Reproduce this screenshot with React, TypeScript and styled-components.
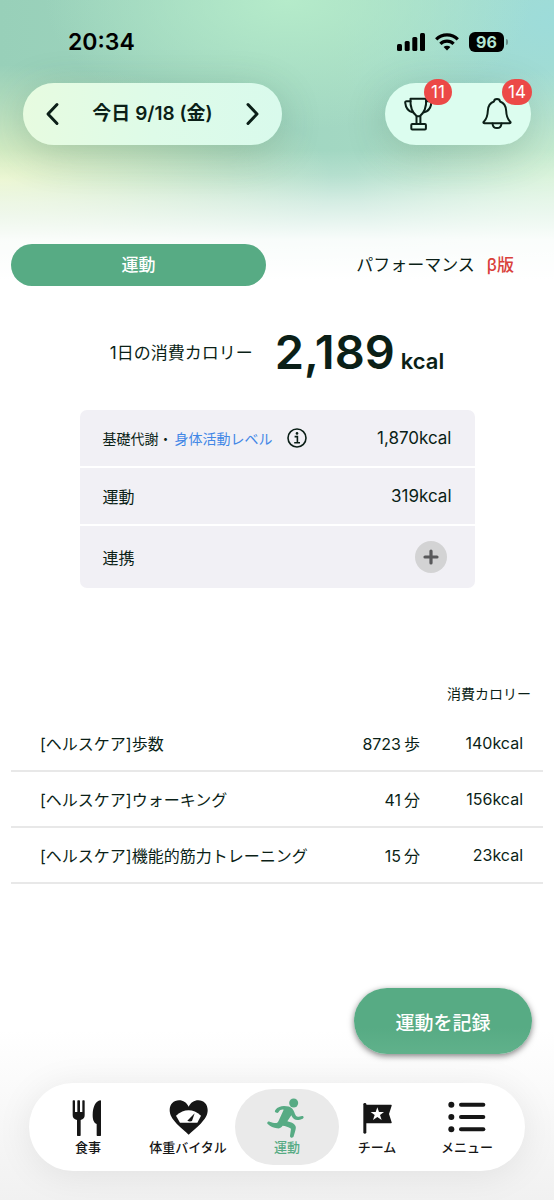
import React from 'react';
import styled, { createGlobalStyle } from 'styled-components';

const ink = '#0b1f17';
const green = '#57ab84';

const GlobalStyle = createGlobalStyle`
  * { box-sizing: border-box; }
  body {
    margin: 0;
    background: #fff;
    color: ${ink};
    font-family: Inter, "Noto Sans CJK JP", sans-serif;
    font-size: 16px;
  }
  button {
    font: inherit;
    color: inherit;
    background: none;
    border: 0;
    padding: 0;
    cursor: pointer;
  }
  svg { display: block; }
`;

const Page = styled.div`
  min-height: 100vh;
  display: flex;
  flex-direction: column;
  background:
    linear-gradient(to top, #f1f1f1 0, #f5f5f5 50px, rgba(255, 255, 255, 0) 170px),
    linear-gradient(to bottom, rgba(255, 255, 255, 0) 150px, rgba(255, 255, 255, 0.2) 175px, rgba(255, 255, 255, 0.55) 202px, rgba(255, 255, 255, 0.93) 240px, #fff 280px),
    radial-gradient(ellipse 60% 115px at 0 180px, #e6f4c6 0, rgba(230, 244, 198, 0.5) 50%, rgba(230, 244, 198, 0) 100%),
    radial-gradient(ellipse 36% 110px at 100% 180px, #d0f0d2 0, rgba(208, 240, 210, 0) 100%),
    radial-gradient(ellipse 44% 130px at 52% 0, #b5ebca 0, rgba(181, 235, 202, 0) 100%),
    radial-gradient(ellipse 40% 170px at 100% 20px, #9ddcda 0, rgba(157, 220, 218, 0) 100%),
    linear-gradient(to right, #98d0b9, #a9dcc8);
`;

const StatusBar = styled.div`
  height: 83px;
  padding: 0 46px 0 68px;
  display: flex;
  align-items: center;
  justify-content: space-between;
  color: #000;
`;

const Clock = styled.span`
  font-size: 23px;
  font-weight: 600;
  line-height: 28px;
`;

const StatusIcons = styled.div`
  display: flex;
  align-items: center;
  gap: 10px;
`;

const Battery = styled.div`
  display: flex;
  align-items: center;
  gap: 2px;
  &::after {
    content: '';
    width: 2px;
    height: 6px;
    border-radius: 0 2px 2px 0;
    background: rgba(0, 0, 0, 0.35);
  }
`;

const BatteryLevel = styled.span`
  width: 35px;
  height: 20px;
  border-radius: 6px;
  background: #000;
  color: #b4e6d4;
  font-size: 16px;
  font-weight: 700;
  line-height: 20px;
  text-align: center;
`;

const Header = styled.header`
  display: flex;
  justify-content: space-between;
  padding: 0 23px;
`;

const Pill = styled.div<{ $width: number; $pad: number; $tint: string }>`
  width: ${p => p.$width}px;
  height: 62px;
  padding: 0 ${p => p.$pad}px;
  border-radius: 31px;
  display: flex;
  align-items: center;
  justify-content: space-between;
  background: ${p => p.$tint};
  box-shadow: 0 8px 40px rgba(50, 90, 65, 0.24);
`;

const DateText = styled.span`
  font-size: 19px;
  font-weight: 600;
  line-height: 24px;
`;

const IconButton = styled.button`
  position: relative;
`;

const Badge = styled.span`
  position: absolute;
  left: 20px;
  bottom: 26px;
  height: 26px;
  min-width: 28px;
  padding: 0 6px;
  border-radius: 13px;
  background: #ec4947;
  color: #fff;
  font-size: 17px;
  line-height: 26px;
`;

const Tabs = styled.div`
  margin: 99px 11px 0;
  display: grid;
  grid-template-columns: 1fr 1fr;
  column-gap: 22px;
`;

const Tab = styled.button<{ $active?: boolean }>`
  height: 42px;
  border-radius: 21px;
  display: grid;
  grid-template-columns: 1fr auto 1fr;
  align-items: center;
  column-gap: 12px;
  font-size: 17px;
  line-height: 24px;
  ${p => p.$active && `background: ${green}; color: #fff; font-weight: 500;`}
`;

const TabLabel = styled.span`
  grid-column: 2;
`;

const Beta = styled.span`
  justify-self: start;
  color: #d9413b;
  font-size: 17px;
  font-weight: 500;
`;

const Total = styled.div`
  margin-top: 38px;
  height: 58px;
  display: flex;
  align-items: center;
  justify-content: center;
  gap: 22px;
`;

const TotalLabel = styled.span`
  font-size: 17px;
  line-height: 24px;
`;

const TotalValue = styled.span`
  padding-top: 6px;
  font-size: 47px;
  font-weight: 600;
  line-height: 56px;
`;

const TotalUnit = styled.span`
  margin-left: 6px;
  font-size: 22px;
`;

const Card = styled.section`
  width: calc(100% - 159px);
  margin: 28px auto 0;
  border-radius: 7px;
  overflow: hidden;
  display: grid;
  row-gap: 2px;
`;

const CardRow = styled.div<{ $tall?: boolean }>`
  height: ${p => (p.$tall ? 62 : 56)}px;
  padding: 0 ${p => (p.$tall ? 28 : 23)}px 0 23px;
  display: flex;
  align-items: center;
  justify-content: space-between;
  background: #f1f0f5;
`;

const Basal = styled.span`
  display: flex;
  align-items: center;
  gap: 14px;
  font-size: 14px;
`;

const BasalLabel = styled.span`
  display: flex;
  gap: 2px;
`;

const LevelLink = styled.a`
  color: #4287e6;
  text-decoration: none;
`;

const Energy = styled.span`
  font-size: 17px;
`;

const AddButton = styled.button`
  width: 32px;
  height: 32px;
  border-radius: 50%;
  background: #d3d3d4;
  display: grid;
  place-items: center;
`;

const Records = styled.table`
  width: calc(100% - 22px);
  margin: 84px 11px 0;
  border-collapse: separate;
  border-spacing: 0;
`;

const HeadCell = styled.th`
  height: 44px;
  padding: 0 12px 2px 0;
  font-size: 14px;
  font-weight: 400;
  text-align: right;
`;

const Cell = styled.td<{ $kind: 'name' | 'amount' | 'kcal' }>`
  height: 56px;
  border-bottom: 2px solid #e8e8e8;
  white-space: nowrap;
  text-align: ${p => (p.$kind === 'name' ? 'left' : 'right')};
  padding: ${p => (p.$kind === 'name' ? '0 0 0 29px' : p.$kind === 'kcal' ? '0 20px 0 0' : '0')};
  ${p => p.$kind === 'kcal' && 'width: 123px;'}
`;

const Unit = styled.span`
  margin-left: 3px;
`;

const RecordButton = styled.button`
  width: 178px;
  height: 66px;
  margin: auto 22px 0 auto;
  border-radius: 33px;
  background: linear-gradient(to bottom, ${green} 60%, #60b18b);
  color: #fff;
  font-size: 19px;
  font-weight: 500;
  box-shadow: 0 2px 6px rgba(0, 0, 0, 0.5);
`;

const Nav = styled.nav`
  margin: 29px 29px 29px;
  padding: 6px;
  border-radius: 44px;
  background: #fff;
  box-shadow: 0 4px 36px rgba(0, 0, 0, 0.08);
  display: grid;
  grid-template-columns: 106fr 94fr 104fr 76fr 104fr;
`;

const NavItem = styled.button<{ $active?: boolean }>`
  height: 76px;
  border-radius: 38px;
  display: flex;
  flex-direction: column;
  align-items: center;
  justify-content: center;
  background: ${p => (p.$active ? '#eaeaea' : 'none')};
  color: ${p => (p.$active ? green : '#161616')};
  font-size: 13px;
  font-weight: 500;
  line-height: 18px;
  white-space: nowrap;
`;

const Chevron = ({ d }: { d: string }) => (
  <svg width="15" height="24" viewBox="0 0 15 24" fill="none" stroke={ink} strokeWidth="3" strokeLinecap="round" strokeLinejoin="round">
    <path d={d} />
  </svg>
);

const SignalIcon = () => (
  <svg width="28" height="18" viewBox="0 0 28 18">
    <rect x="0" y="11" width="5" height="7" rx="1.5" />
    <rect x="7.7" y="8" width="5" height="10" rx="1.5" />
    <rect x="15.3" y="4" width="5" height="14" rx="1.5" />
    <rect x="23" y="0" width="5" height="18" rx="1.5" />
  </svg>
);

const WifiIcon = () => (
  <svg width="24" height="18" viewBox="0 0 24 18" fill="none" stroke="#000" strokeWidth="3.2">
    <path d="M1.2 6.4a15.3 15.3 0 0 1 21.6 0" />
    <path d="M5.4 10.8a9.3 9.3 0 0 1 13.2 0" />
    <path d="M12 17.6l-3.4-3.5a4.8 4.8 0 0 1 6.8 0z" fill="#000" stroke="none" />
  </svg>
);

const TrophyIcon = () => (
  <svg width="28" height="34" viewBox="0 0 28 34" fill="none" stroke={ink} strokeWidth="2" strokeLinejoin="round" strokeLinecap="round">
    <path d="M6.500 1.800h15.600c.5 8-1.300 13.500-6.300 17.400h-3C7.800 15.300 6 9.800 6.500 1.800z" />
    <path d="M6.500 4.200H2.600c-1 0-1.500.6-1.400 1.500.6 5.600 3 8.600 7.300 9.600" />
    <path d="M22.100 4.200H26c1 0 1.500.6 1.400 1.500-.6 5.600-3 8.600-7.300 9.600" />
    <path d="M12.500 19.300v7.500M16.400 19.300v7.500" />
    <rect x="7.300" y="27" width="14.600" height="5.600" rx="1" />
  </svg>
);

const BellIcon = () => (
  <svg width="30" height="34" viewBox="0 0 30 34" fill="none" stroke={ink} strokeWidth="2" strokeLinejoin="round" strokeLinecap="round">
    <path d="M12 4.500C12.200 1.200 17.800 1.200 18 4.500c4.200 1.300 6 5 6.200 9.500.2 5.300.8 7.500 3.800 10.500.9.800.8 1.800-.3 1.800H2.300c-1.100 0-1.200-1-.3-1.800C5 21.500 5.600 19.300 5.800 14 6 9.500 7.800 5.800 12 4.500z" />
    <path d="M10.500 26.500c.2 2.900 2 4.600 4.500 4.600s4.300-1.700 4.500-4.600" />
  </svg>
);

const InfoIcon = () => (
  <svg width="20" height="20" viewBox="0 0 20 20" fill="none" stroke={ink} strokeWidth="1.600">
    <circle cx="10" cy="10" r="9" />
    <path d="M7.600 8.600h2.800v6M7.200 14.700h5.800" />
    <circle cx="10" cy="5.400" r="1.300" fill={ink} stroke="none" />
  </svg>
);

const PlusIcon = () => (
  <svg width="16" height="16" viewBox="0 0 16 16" stroke="#59595b" strokeWidth="3.200" strokeLinecap="round">
    <path d="M8 2v12M2 8h12" />
  </svg>
);

const MealIcon = () => (
  <svg width="40" height="40" viewBox="144 80 120 120" fill="currentColor">
    <path d="M158 89q0-2 2-2h3q2 0 2 2v33h7V89q0-2 2-2h4q2 0 2 2v33h7V89q0-2 2-2h3q2 0 2 2v43c0 8-4 12-12 14v46q0 2-2 2h-7q-2 0-2-2v-46c-9-2-13-6-13-14z" />
    <path d="M241 87q2 0 2 2v103q0 2-2 2h-9q-2 0-2-2v-34c-8-3-12-11-12-27 0-24 9-42 23-44z" />
  </svg>
);

const VitalIcon = () => (
  <svg width="40" height="40" viewBox="442 80 120 120">
    <path fill="currentColor" d="M504 190c-10-11-22-18-36-33-14-15-21-26-21-41 0-17 12-29 28-29 13 0 23 7 29 19 6-12 16-19 29-19 16 0 28 12 28 29 0 15-7 26-21 41-14 15-26 22-36 33z" />
    <path fill="#fff" d="M466 133q38-32 75 0l-11 21h-52z" />
    <path fill="currentColor" d="M500 148l22-22-8 23q-7 3-14-1z" />
  </svg>
);

const RunIcon = () => (
  <svg width="40" height="40" viewBox="142 80 120 120" fill="currentColor">
    <circle cx="222" cy="95" r="13.500" />
    <path d="M168 124c-3-2-3-5-1-8 7-9 16-12 26-12 10 0 20 2 25 8 6 7 6 13 10 20 2 4 5 5 9 4l10-2c5-1 7 6 2 8-9 4-19 6-26 1-4-3-6-7-8-11l-12 18c10 2 20 6 24 13 3 6 1 11-1 18l-4 14c-2 7-12 5-11-2l3-21c-8-6-17-8-25-9-5 7-10 9-17 8-10-1-20-6-27-12-5-4-1-10 5-8 8 3 15 5 21 4 4-1 5-5 7-9l14-31c-7-1-11 1-15 7-3 4-6 4-9 0z" />
  </svg>
);

const TeamIcon = () => (
  <svg width="40" height="40" viewBox="412 80 120 120">
    <rect x="431" y="95" width="9" height="92" rx="4" fill="currentColor" />
    <path fill="currentColor" d="M438 100h76q3 0 2 3l-8 25 8 25q1 3-2 3h-76z" />
    <path fill="#fff" d="M473 108l5 14h15l-12 9 5 15-13-9-13 9 5-15-12-9h15z" />
  </svg>
);

const MenuIcon = () => (
  <svg width="40" height="40" viewBox="680 80 120 120" fill="currentColor" stroke="currentColor" strokeWidth="12" strokeLinecap="round">
    {[100, 137, 174].map(y => (
      <g key={y}>
        <circle cx="693" cy={y} r="9" stroke="none" />
        <path d={`M722 ${y}h67`} />
      </g>
    ))}
  </svg>
);

const records = [
  { name: '[ヘルスケア]歩数', amount: '8723', unit: '歩', kcal: '140kcal' },
  { name: '[ヘルスケア]ウォーキング', amount: '41', unit: '分', kcal: '156kcal' },
  { name: '[ヘルスケア]機能的筋力トレーニング', amount: '15', unit: '分', kcal: '23kcal' },
];

const navItems = [
  { label: '食事', icon: <MealIcon /> },
  { label: '体重バイタル', icon: <VitalIcon /> },
  { label: '運動', icon: <RunIcon />, active: true },
  { label: 'チーム', icon: <TeamIcon /> },
  { label: 'メニュー', icon: <MenuIcon /> },
];

export default function App() {
  return (
    <Page lang="ja">
      <GlobalStyle />
      <StatusBar>
        <Clock>20:34</Clock>
        <StatusIcons>
          <SignalIcon />
          <WifiIcon />
          <Battery>
            <BatteryLevel>96</BatteryLevel>
          </Battery>
        </StatusIcons>
      </StatusBar>

      <Header>
        <Pill $width={259} $pad={22} $tint="linear-gradient(to right, #e7fbe0, #defbe8 50%, #d9faec)">
          <button aria-label="前の日"><Chevron d="M12 2.500L3 12l9 9.500" /></button>
          <DateText>今日 9/18 (金)</DateText>
          <button aria-label="次の日"><Chevron d="M3 2.500L12 12l-9 9.500" /></button>
        </Pill>
        <Pill $width={146} $pad={19} $tint="#dcfdef">
          <IconButton aria-label="トロフィー"><TrophyIcon /><Badge>11</Badge></IconButton>
          <IconButton aria-label="お知らせ"><BellIcon /><Badge>14</Badge></IconButton>
        </Pill>
      </Header>

      <main>
        <Tabs>
          <Tab $active><TabLabel>運動</TabLabel></Tab>
          <Tab><TabLabel>パフォーマンス</TabLabel><Beta>β版</Beta></Tab>
        </Tabs>

        <Total>
          <TotalLabel>1日の消費カロリー</TotalLabel>
          <TotalValue>2,189<TotalUnit>kcal</TotalUnit></TotalValue>
        </Total>

        <Card>
          <CardRow>
            <Basal>
              <BasalLabel>基礎代謝・<LevelLink href="#level">身体活動レベル</LevelLink></BasalLabel>
              <button aria-label="説明"><InfoIcon /></button>
            </Basal>
            <Energy>1,870kcal</Energy>
          </CardRow>
          <CardRow>
            <span>運動</span>
            <Energy>319kcal</Energy>
          </CardRow>
          <CardRow $tall>
            <span>連携</span>
            <AddButton aria-label="連携を追加"><PlusIcon /></AddButton>
          </CardRow>
        </Card>

        <Records>
          <thead>
            <tr><HeadCell colSpan={3}>消費カロリー</HeadCell></tr>
          </thead>
          <tbody>
            {records.map(r => (
              <tr key={r.name}>
                <Cell $kind="name">{r.name}</Cell>
                <Cell $kind="amount">{r.amount}<Unit>{r.unit}</Unit></Cell>
                <Cell $kind="kcal">{r.kcal}</Cell>
              </tr>
            ))}
          </tbody>
        </Records>
      </main>

      <RecordButton>運動を記録</RecordButton>

      <Nav>
        {navItems.map(item => (
          <NavItem key={item.label} $active={item.active}>
            {item.icon}
            {item.label}
          </NavItem>
        ))}
      </Nav>
    </Page>
  );
}
